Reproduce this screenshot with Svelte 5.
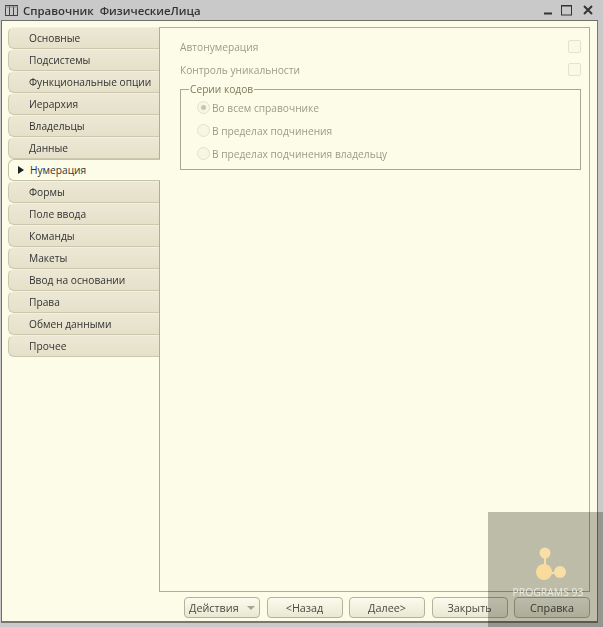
<script>
  const tabs = [
    'Основные', 'Подсистемы', 'Функциональные опции', 'Иерархия', 'Владельцы', 'Данные',
    'Нумерация', 'Формы', 'Поле ввода', 'Команды', 'Макеты', 'Ввод на основании',
    'Права', 'Обмен данными', 'Прочее'
  ];
  const active = 'Нумерация';
  const series = ['Во всем справочнике', 'В пределах подчинения', 'В пределах подчинения владельцу'];
</script>

<div class="window">
  <header class="titlebar">
    <svg class="app_icon" width="15" height="13" viewBox="0 0 15 13">
      <path d="M1 1.5h13M1.5 1v11M5.5 1v11M9.5 1v11M13.5 1v11M1 11.5h13" fill="none" stroke="#444" stroke-width="1" />
      <path d="M1 3h13" stroke="#888" stroke-width="1" />
    </svg>
    <span class="title">Справочник&nbsp; ФизическиеЛица</span>
    <div class="controls">
      <svg width="10" height="10" viewBox="0 0 10 10"><path d="M1 8.5h8" stroke="#333" stroke-width="2" /></svg>
      <svg width="11" height="11" viewBox="0 0 11 11"><rect x="0.5" y="0.5" width="10" height="9.5" fill="none" stroke="#333" stroke-width="1" /><path d="M0 1h11" stroke="#333" /></svg>
      <svg width="10" height="10" viewBox="0 0 10 10"><path d="M1 1l8 8M9 1l-8 8" stroke="#333" stroke-width="2" /></svg>
    </div>
  </header>

  <div class="body">
    <div class="main">
      <nav class="tabs">
        {#each tabs as tab}
          <div class="tab" class:active={tab === active}>
            {#if tab === active}<span class="marker"></span>{/if}
            <span class="tab_label">{tab}</span>
          </div>
        {/each}
      </nav>

      <section class="panel">
        <div class="check_row"><span>Автонумерация</span><span class="checkbox"></span></div>
        <div class="check_row"><span>Контроль уникальности</span><span class="checkbox"></span></div>
        <fieldset class="group">
          <legend>Серии кодов</legend>
          {#each series as item, i}
            <div class="radio_row">
              <span class="radio" class:checked={i === 0}></span>
              <span>{item}</span>
            </div>
          {/each}
        </fieldset>
      </section>
    </div>

    <footer class="buttons">
      <button class="actions">Действия <span class="caret"></span></button>
      <button>&lt;Назад</button>
      <button>Далее&gt;</button>
      <button>Закрыть</button>
      <button>Справка</button>
    </footer>
  </div>

  <div class="watermark">
    <svg width="40" height="42" viewBox="0 0 40 42">
      <path d="M15 11V31H30" fill="none" stroke="#f7dfa5" stroke-width="2" />
      <circle cx="15" cy="11" r="5.5" fill="#f7dfa5" />
      <circle cx="14" cy="30" r="8" fill="#f9dc9c" />
      <circle cx="30" cy="30" r="6" fill="#f7dfa5" />
    </svg>
    <span class="wm_text">PROGRAMS 93</span>
  </div>
</div>

<style>
  :global(body) {
    margin: 0;
    background: #c9c9c9;
  }

  .window {
    position: relative;
    width: 603px;
    height: 627px;
    overflow: hidden;
    display: flex;
    flex-direction: column;
    background: #c9c9c9;
    font-family: "Open Sans", "Liberation Sans", sans-serif;
    font-size: 10.2px;
    color: #333;
  }

  .titlebar {
    height: 20px;
    flex: none;
    display: flex;
    align-items: center;
    padding: 0 10px 0 4px;
    gap: 4px;
    box-sizing: border-box;
  }

  .title {
    font-size: 11.4px;
    font-weight: 600;
    color: #333;
  }

  .controls {
    margin-left: auto;
    display: flex;
    align-items: center;
    gap: 9px;
  }

  .controls svg:first-child {
    margin-right: -1px;
  }

  .controls svg:last-child {
    margin-left: 2px;
  }

  .body {
    height: 603px;
    flex: none;
    margin: 0 5px 0 1px;
    display: flex;
    flex-direction: column;
    background: #fcfce9;
    border: 1px solid #6f6f68;
    border-right-color: #77776e;
    border-bottom: 2px solid #77776e;
    box-sizing: border-box;
  }

  .main {
    flex: 1;
    display: flex;
    padding: 6px 7px 0 6px;
    min-height: 0;
  }

  .tabs {
    width: 151px;
    flex: none;
    display: flex;
    flex-direction: column;
  }

  .tab {
    height: 22px;
    box-sizing: border-box;
    display: flex;
    align-items: center;
    position: relative;
    padding-left: 20px;
    background: linear-gradient(#ece8d5, #e4e0c9);
    border: 1px solid #cbc8ad;
    border-right: 0;
    border-top-color: #f3f0e0;
    border-radius: 6px 0 0 6px;
    color: #333;
  }

  .tab.active {
    background: #fcfce9;
    border-color: #c6c3a6;
    z-index: 1;
    width: 152px;
    padding-left: 21px;
  }

  .marker {
    position: absolute;
    left: 9px;
    top: 6px;
    border-left: 6px solid #222;
    border-top: 4px solid transparent;
    border-bottom: 4px solid transparent;
  }

  .panel {
    flex: 1;
    padding: 7px 8px 0 20px;
    border: 1px solid #aeae96;
    background: #fcfce9;
    color: #9c9c86;
    box-sizing: border-box;
  }

  .check_row {
    height: 23px;
    display: flex;
    align-items: center;
    justify-content: space-between;
  }

  .checkbox {
    width: 11px;
    height: 11px;
    border: 1px solid #e3e2cd;
    border-radius: 2px;
    background: #f9f9e6;
  }

  .group {
    margin: 3px 0 0;
    padding: 0 0 0 16px;
    height: 86px;
    box-sizing: border-box;
    border: 1px solid #a8a88e;
  }

  legend {
    padding: 0 1px;
    margin-left: -8px;
    margin-bottom: 1px;
    color: #7d7a55;
    line-height: 11px;
  }

  .radio_row {
    height: 23px;
    display: flex;
    align-items: center;
    gap: 2px;
  }

  .radio {
    width: 11px;
    height: 11px;
    border: 1px solid #e3e2cd;
    border-radius: 50%;
    display: flex;
    align-items: center;
    justify-content: center;
    background: #f6f6e3;
  }

  .radio.checked::after {
    content: '';
    width: 5px;
    height: 5px;
    border-radius: 50%;
    background: #c6c6b2;
  }

  .buttons {
    height: 29px;
    flex: none;
    display: flex;
    justify-content: flex-end;
    align-items: flex-start;
    gap: 6.5px;
    padding: 5px 7px 0 0;
    box-sizing: border-box;
  }

  button {
    width: 76px;
    height: 21px;
    padding: 0;
    font: inherit;
    font-size: 10.8px;
    color: #4a4a40;
    background: linear-gradient(#fbfbee, #e9e8d2);
    border: 1px solid #b3b29a;
    border-radius: 4px;
  }

  .actions {
    display: flex;
    align-items: center;
    justify-content: space-between;
    padding: 0 4px;
    box-sizing: border-box;
  }

  .caret {
    border-top: 4px solid #a5a590;
    border-left: 4px solid transparent;
    border-right: 4px solid transparent;
  }

  .watermark {
    position: absolute;
    left: 488px;
    top: 512px;
    width: 115px;
    height: 115px;
    display: flex;
    flex-direction: column;
    align-items: center;
  }

  .watermark::before {
    content: '';
    position: absolute;
    inset: 0;
    background: #bebeb8;
    mix-blend-mode: multiply;
  }

  .watermark svg {
    position: relative;
    margin-top: 30px;
    margin-left: 9px;
  }

  .wm_text {
    position: relative;
    margin-top: 1px;
    margin-left: 5px;
    font-size: 10.4px;
    color: #ebebe2;
  }
</style>
